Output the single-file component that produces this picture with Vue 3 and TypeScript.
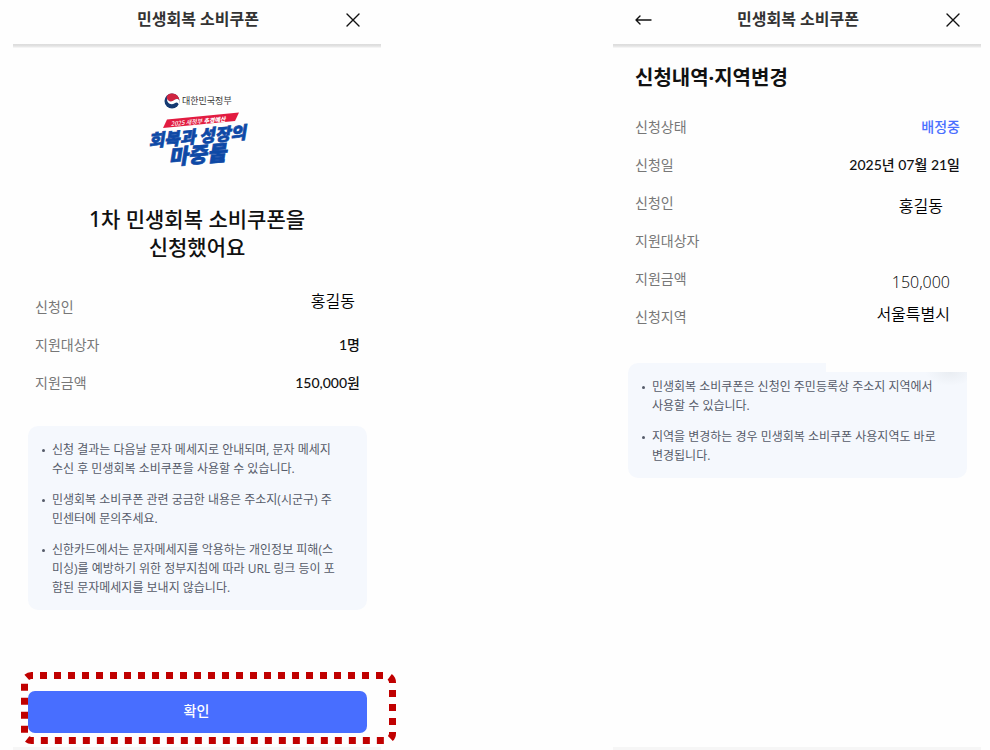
<script setup lang="ts">
interface Row {
  label: string
  value: string
  tone?: string
}

const appTitle = '민생회복 소비쿠폰'

const summary: Row[] = [
  { label: '신청인', value: '홍길동', tone: 'typed high' },
  { label: '지원대상자', value: '1명' },
  { label: '지원금액', value: '150,000원' },
]

const details: Row[] = [
  { label: '신청상태', value: '배정중', tone: 'status' },
  { label: '신청일', value: '2025년 07월 21일' },
  { label: '신청인', value: '홍길동', tone: 'typed low inset' },
  { label: '지원대상자', value: '' },
  { label: '지원금액', value: '150,000', tone: 'typed low near' },
  { label: '신청지역', value: '서울특별시', tone: 'typed raised near' },
]

const resultNotes: string[][] = [
  ['신청 결과는 다음날 문자 메세지로 안내되며, 문자 메세지', '수신 후 민생회복 소비쿠폰을 사용할 수 있습니다.'],
  ['민생회복 소비쿠폰 관련 궁금한 내용은 주소지(시군구) 주', '민센터에 문의주세요.'],
  ['신한카드에서는 문자메세지를 악용하는 개인정보 피해(스', '미싱)를 예방하기 위한 정부지침에 따라 URL 링크 등이 포', '함된 문자메세지를 보내지 않습니다.'],
]

const regionNotes: string[][] = [
  ['민생회복 소비쿠폰은 신청인 주민등록상 주소지 지역에서', '사용할 수 있습니다.'],
  ['지역을 변경하는 경우 민생회복 소비쿠폰 사용지역도 바로', '변경됩니다.'],
]
</script>

<template>
  <main class="page">
    <section class="panel">
      <header class="bar">
        <span></span>
        <h1 class="bar-title">{{ appTitle }}</h1>
        <button class="icon-button" type="button" aria-label="닫기">
          <svg width="16" height="16" viewBox="0 0 16 16"><path d="M2 2L14 14M14 2L2 14" /></svg>
        </button>
      </header>

      <svg class="logo" width="106" height="80" viewBox="0 0 106 80" role="img" aria-label="대한민국정부">
        <circle cx="28" cy="11" r="7.5" fill="#143a72" />
        <path d="M24 4.7A7.5 7.5 0 0 1 35.5 10.6C34.4 8.7 32 8.6 30.3 10.2C28 12.3 24.6 12.2 23.2 9.6C22.3 7.9 22.6 6 24 4.7Z" fill="#cf2440" />
        <path d="M23.2 8.6C23.7 11.6 27.6 12.5 30.3 10.1C32.2 8.4 34.6 8.8 35.5 11C35.5 12.4 35.1 13.6 34.4 14.7C34.3 12.5 32.5 12 30.7 13.2C27.2 15.5 22.3 13.4 23.2 8.6Z" fill="#fff" />
        <text x="38" y="14" class="logo-gov">대한민국정부</text>
        <path d="M23 29.5L95 22.5L91 31L19 38Z" fill="#e21b40" />
        <g transform="translate(27 36) rotate(-5)">
          <text class="logo-budget">2025 새정부 <tspan class="strong">추경예산</tspan></text>
        </g>
        <g transform="translate(5 57) rotate(-5)"><text class="logo-slogan">회복과 성장의</text></g>
        <g transform="translate(25 75) rotate(-5)"><text class="logo-slogan big">마중물</text></g>
      </svg>

      <h2 class="headline">1차 민생회복 소비쿠폰을<br />신청했어요</h2>

      <dl class="rows summary">
        <div v-for="row in summary" :key="row.label" class="row">
          <dt>{{ row.label }}</dt>
          <dd :class="row.tone">{{ row.value }}</dd>
        </div>
      </dl>

      <ul class="notes">
        <li v-for="(note, i) in resultNotes" :key="i">
          <span v-for="line in note" :key="line" class="line">{{ line }}</span>
        </li>
      </ul>

      <div class="action">
        <button class="confirm" type="button">확인</button>
        <svg class="marker" aria-hidden="true"><rect x="3.5" y="3.5" rx="7" /></svg>
      </div>
    </section>

    <section class="panel">
      <header class="bar">
        <button class="icon-button" type="button" aria-label="뒤로">
          <svg width="18" height="16" viewBox="0 0 18 16"><path d="M17 8H2M6 4L2 8L6 12" /></svg>
        </button>
        <h1 class="bar-title">{{ appTitle }}</h1>
        <button class="icon-button" type="button" aria-label="닫기">
          <svg width="16" height="16" viewBox="0 0 16 16"><path d="M2 2L14 14M14 2L2 14" /></svg>
        </button>
      </header>

      <h2 class="subtitle">신청내역·지역변경</h2>

      <dl class="rows details">
        <div v-for="row in details" :key="row.label" class="row">
          <dt>{{ row.label }}</dt>
          <dd :class="row.tone">{{ row.value }}</dd>
        </div>
      </dl>

      <ul class="notes clipped">
        <li v-for="(note, i) in regionNotes" :key="i">
          <span v-for="line in note" :key="line" class="line">{{ line }}</span>
        </li>
      </ul>
    </section>
  </main>
</template>

<style>
body {
  margin: 0;
  background: #fefefe;
}
</style>

<style scoped>
.page {
  box-sizing: border-box;
  display: grid;
  grid-template-columns: 1fr 1fr;
  column-gap: 232px;
  min-height: 100vh;
  padding: 0 9px 0 13px;
  font-family: "Open Sans", "Noto Sans CJK KR", sans-serif;
  color: #111;
}

.panel {
  display: flex;
  flex-direction: column;
  min-width: 0;
  border-bottom: 3px solid #f6f6f6;
}

.bar {
  display: grid;
  grid-template-columns: 20px 1fr 20px;
  align-items: center;
  height: 38px;
  padding: 0 18px 6px 20px;
  position: relative;
}

.bar::after {
  content: "";
  position: absolute;
  left: 0;
  right: 0;
  top: 44px;
  height: 4px;
  background: linear-gradient(#dcdcdc, #e2e2e2 50%, #fafafa);
}

.bar-title {
  margin: 0;
  font-size: 16px;
  line-height: 24px;
  font-weight: 700;
  text-align: center;
  color: #333;
}

.icon-button {
  display: flex;
  align-items: center;
  justify-content: center;
  padding: 1px 0 0;
  border: 0;
  background: none;
}

.icon-button path {
  fill: none;
  stroke: #111;
  stroke-width: 1.4;
  stroke-linecap: round;
  stroke-linejoin: round;
}

.logo {
  align-self: center;
  margin-top: 46px;
}

.logo-gov {
  font-size: 9px;
  font-weight: 400;
  fill: #333;
}

.logo-budget {
  font-family: "Noto Sans CJK KR", sans-serif;
  font-size: 6px;
  font-style: italic;
  font-weight: 500;
  fill: #fff;
}

.logo-budget .strong {
  font-weight: 900;
}

.logo-slogan {
  font-family: "Noto Sans CJK KR", sans-serif;
  font-size: 17px;
  font-style: italic;
  font-weight: 900;
  fill: #0e49a6;
  stroke: #0e49a6;
  stroke-width: 0.7;
}

.logo-slogan.big {
  font-size: 21px;
}

.headline {
  margin: 35px 0 0;
  font-family: "Noto Sans", "Noto Sans CJK KR", sans-serif;
  font-size: 21px;
  line-height: 28px;
  font-weight: 500;
  text-align: center;
}

.subtitle {
  margin: 20px 22px 0;
  font-family: "Noto Sans", "Noto Sans CJK KR", sans-serif;
  font-size: 20px;
  line-height: 28px;
  font-weight: 700;
}

.rows {
  margin: 0;
  padding: 0 21px 0 22px;
  font-family: Lato, "Noto Sans CJK KR", sans-serif;
}

.summary {
  margin-top: 27px;
}

.details {
  margin-top: 16px;
}

.row {
  display: flex;
  align-items: center;
  justify-content: space-between;
  height: 38px;
  font-size: 14px;
  line-height: 20px;
}

dt {
  color: #777;
}

dd {
  margin: 0;
  font-weight: 500;
}

.status {
  color: #4a6fff;
}

.typed {
  padding-right: 5px;
  font-family: "Open Sans", "Noto Sans CJK KR", sans-serif;
  font-size: 16px;
  font-weight: 350;
  color: #000;
}

.inset {
  padding-right: 17px;
}

.near {
  padding-right: 10px;
}

.high {
  padding-bottom: 12px;
}

.raised {
  padding-bottom: 6px;
}

.low {
  padding-top: 6px;
}

.notes {
  display: grid;
  row-gap: 12px;
  margin: 24px 14px 0 15px;
  padding: 14px 11px 13px 24px;
  border-radius: 10px;
  background: #f5f8fd;
  list-style: none;
  font-size: 12px;
  line-height: 19px;
  color: #555b69;
  position: relative;
}

.notes li {
  position: relative;
}

.notes li::before {
  content: "";
  position: absolute;
  left: -10px;
  top: 9px;
  width: 3px;
  height: 3px;
  border-radius: 50%;
  background: #555b69;
}

.line {
  display: block;
  white-space: nowrap;
}

.clipped {
  margin-top: 27px;
}

.clipped::before {
  content: "";
  position: absolute;
  top: 0;
  right: 0;
  width: 141px;
  height: 9px;
  background: #fefefe;
}

.clipped::after {
  content: "";
  position: absolute;
  top: 9px;
  right: 0;
  width: 42px;
  height: 14px;
  background: radial-gradient(ellipse at 60% 0, #e9edf2, #f5f8fd00 70%);
}

.action {
  position: relative;
  margin: auto 14px 14px 15px;
  padding-top: 24px;
}

.confirm {
  display: block;
  width: 100%;
  height: 42px;
  padding: 0 2px 4px 0;
  border: 0;
  border-radius: 7px;
  background: #486eff;
  font-family: "Noto Sans CJK KR", sans-serif;
  font-size: 14px;
  font-weight: 500;
  color: #fff;
}

.marker {
  position: absolute;
  left: -7px;
  bottom: -11px;
  width: calc(100% + 36px);
  height: 72px;
  pointer-events: none;
}

.marker rect {
  width: calc(100% - 7px);
  height: calc(100% - 7px);
  fill: none;
  stroke: #c00000;
  stroke-width: 7;
  stroke-dasharray: 7 7;
  stroke-dashoffset: 5.5;
}
</style>
